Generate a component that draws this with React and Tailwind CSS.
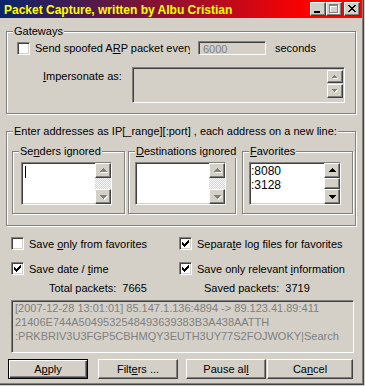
import React from "react";

const raised =
  "border border-t-white border-l-white border-r-[#404040] border-b-[#404040] shadow-[inset_-1px_-1px_0_#808080,inset_1px_1px_0_#d4d0c8]";
const sunken =
  "border border-t-[#808080] border-l-[#808080] border-r-white border-b-white shadow-[inset_1px_1px_0_#404040,inset_-1px_-1px_0_#d4d0c8]";
const groupCls =
  "relative border border-[#808080] shadow-[1px_1px_0_#ffffff,inset_1px_1px_0_#ffffff]";

function U({ children }) {
  return <span className="underline underline-offset-[1px]">{children}</span>;
}

function Group({ label, className = "", children }) {
  return (
    <div className={`${groupCls} ${className}`}>
      <span className="absolute left-[6px] top-[-8px] bg-[#d4d0c8] px-[1px] leading-[14px] whitespace-nowrap">
        {label}
      </span>
      {children}
    </div>
  );
}

function CheckMark() {
  return (
    <svg className="absolute left-[2px] top-[2px]" width="7" height="7" viewBox="0 0 7 7" shapeRendering="crispEdges">
      <path
        fill="#000"
        d="M6 0h1v1H6z M5 1h2v1H5z M0 2h1v1H0z M4 2h3v1H4z M0 3h2v1H0z M3 3h3v1H3z M0 4h5v1H0z M1 5h3v1H1z M2 6h1v1H2z"
      />
    </svg>
  );
}

function Check({ checked }) {
  return (
    <span className={`relative block w-[13px] h-[13px] shrink-0 bg-white ${sunken}`}>
      {checked && <CheckMark />}
    </span>
  );
}

function Arrow({ dir = "up", disabled, small }) {
  const up = small
    ? "M2 0h1v1H2z M1 1h3v1H1z M0 2h5v1H0z"
    : "M3 0h1v1H3z M2 1h3v1H2z M1 2h5v1H1z M0 3h7v1H0z";
  const down = small
    ? "M0 0h5v1H0z M1 1h3v1H1z M2 2h1v1H2z"
    : "M0 0h7v1H0z M1 1h5v1H1z M2 2h3v1H2z M3 3h1v1H3z";
  const d = dir === "up" ? up : down;
  const w = small ? 5 : 7;
  const h = small ? 3 : 4;
  return (
    <svg width={w + 1} height={h + 1} viewBox={`0 0 ${w + 1} ${h + 1}`} shapeRendering="crispEdges">
      {disabled ? (
        <>
          <path fill="#ffffff" d={d} transform="translate(1 1)" />
          <path fill="#808080" d={d} />
        </>
      ) : (
        <path fill="#000000" d={d} />
      )}
    </svg>
  );
}

function ScrollBtn({ dir, disabled, className = "" }) {
  return (
    <div className={`flex items-center justify-center bg-[#d4d0c8] ${raised} ${className}`}>
      <span className={dir === "up" ? "mt-[-1px] ml-[1px]" : "mt-[1px] ml-[1px]"}>
        <Arrow dir={dir} disabled={disabled} />
      </span>
    </div>
  );
}

function Scroll({ disabled }) {
  return (
    <div className="flex flex-col w-[16px] h-full shrink-0">
      <ScrollBtn dir="up" disabled={disabled} className="h-[15px]" />
      {disabled ? (
        <div className="flex-1 bg-[image:repeating-conic-gradient(#ffffff_0%_25%,#d4d0c8_0%_50%)] bg-[length:2px_2px]" />
      ) : (
        <div className={`flex-1 bg-[#d4d0c8] ${raised}`} />
      )}
      <ScrollBtn dir="down" disabled={disabled} className="h-[15px]" />
    </div>
  );
}

function TitleBtn({ children }) {
  return (
    <div className={`relative w-[16px] h-[14px] bg-[#d4d0c8] ${raised}`}>{children}</div>
  );
}

function Button({ children, def, className = "" }) {
  const cls = def
    ? "border border-black shadow-[inset_1px_1px_0_#ffffff,inset_-1px_-1px_0_#404040,inset_-2px_-2px_0_#808080]"
    : raised;
  return (
    <div className={`h-[20px] flex items-center justify-center bg-[#d4d0c8] leading-[14px] ${cls} ${className}`}>
      {children}
    </div>
  );
}

export default function App() {
  return (
    <div className="w-[365px] h-[386px] bg-[#d4d0c8] overflow-hidden font-['Liberation_Sans',Arial,sans-serif] text-[11px] text-black">
      <div className="w-[364px] h-[385px] border-r border-b border-[#404040] shadow-[inset_-1px_-1px_0_#808080] flex flex-col">
        {/* Title bar */}
        <div className="w-[362px] h-[18px] shrink-0 flex items-center bg-[image:linear-gradient(to_right,#0a246a_0%,#ff0000_85%)]">
          <span className="ml-[4px] pt-[1px] text-[12px] font-bold text-[#ffff00] leading-[14px] whitespace-nowrap">
            Packet Capture, written by Albu Cristian
          </span>
          <div className="ml-auto flex items-center mr-[2px]">
            <TitleBtn>
              <svg className="absolute left-[3px] top-[8px]" width="6" height="2" shapeRendering="crispEdges">
                <rect x="0" y="0" width="6" height="2" fill="#000" />
              </svg>
            </TitleBtn>
            <TitleBtn>
              <svg className="absolute left-[2px] top-[1px]" width="10" height="10" viewBox="0 0 10 10" shapeRendering="crispEdges">
                <path fill="#ffffff" transform="translate(1 1)" d="M0 0h9v2H0z M0 2h1v7H0z M8 2h1v7H8z M0 8h9v1H0z" />
                <path fill="#808080" d="M0 0h9v2H0z M0 2h1v7H0z M8 2h1v7H8z M0 8h9v1H0z" />
              </svg>
            </TitleBtn>
            <div className="ml-[2px]">
              <TitleBtn>
                <svg className="absolute left-[3px] top-[2px]" width="8" height="7" viewBox="0 0 8 7" shapeRendering="crispEdges">
                  <path
                    fill="#000"
                    d="M0 0h2v1H0z M6 0h2v1H6z M1 1h2v1H1z M5 1h2v1H5z M2 2h4v1H2z M3 3h2v1H3z M2 4h4v1H2z M1 5h2v1H1z M5 5h2v1H5z M0 6h2v1H0z M6 6h2v1H6z"
                  />
                </svg>
              </TitleBtn>
            </div>
          </div>
        </div>

        {/* Gateways */}
        <Group label="Gateways" className="ml-[6px] mt-[13px] w-[350px] h-[83px] shrink-0">
          <div className="flex items-center mt-[9px] ml-[10px] h-[14px]">
            <div className="w-[173px] overflow-hidden flex items-center gap-[5px] whitespace-nowrap">
              <Check />
              <span className="leading-[14px]">
                Send spoofed A<U>R</U>P packet every
              </span>
            </div>
            <div className={`ml-[8px] w-[68px] h-[14px] overflow-hidden bg-[#d4d0c8] ${sunken}`}>
              <div className="pl-[4px] leading-[14px] text-[#808080]">6000</div>
            </div>
            <span className="ml-[9px] leading-[14px]">seconds</span>
          </div>
          <div className="flex items-start mt-[12px]">
            <div className="w-[125px] pl-[36px] mt-[2px] leading-[14px] whitespace-nowrap">
              <U>I</U>mpersonate as:
            </div>
            <div className={`w-[213px] h-[36px] bg-[#d4d0c8] ${sunken} flex justify-end`}>
              <div className="flex flex-col gap-[1px] pt-[2px] mr-[1px]">
                <div className={`w-[16px] h-[13px] flex items-center justify-center ${raised}`}>
                  <Arrow dir="up" disabled small />
                </div>
                <div className={`w-[16px] h-[14px] flex items-center justify-center ${raised}`}>
                  <Arrow dir="down" disabled small />
                </div>
              </div>
            </div>
          </div>
        </Group>

        {/* Addresses */}
        <Group
          label="Enter addresses as IP[_range][:port] , each address on a new line:"
          className="ml-[6px] mt-[17px] w-[350px] h-[95px] shrink-0"
        >
          <div className="flex mt-[19px] ml-[5px]">
            <Group label={<>Se<U>n</U>ders ignored</>} className="w-[113px] h-[63px]">
              <div className={`mt-[10px] ml-[8px] w-[91px] h-[43px] bg-white ${sunken} flex`}>
                <div className="flex-1 relative">
                  <div className="absolute left-[3px] top-[3px] w-[1px] h-[12px] bg-black" />
                </div>
                <Scroll disabled />
              </div>
            </Group>
            <Group label={<><U>D</U>estinations ignored</>} className="ml-[3px] w-[108px] h-[63px]">
              <div className={`mt-[10px] ml-[6px] w-[91px] h-[43px] bg-white ${sunken} flex`}>
                <div className="flex-1" />
                <Scroll disabled />
              </div>
            </Group>
            <Group label={<><U>F</U>avorites</>} className="ml-[6px] w-[111px] h-[63px]">
              <div className={`mt-[10px] ml-[6px] w-[92px] h-[43px] bg-white ${sunken} flex`}>
                <div className="flex-1 pl-[1px] pt-[1px] leading-[14px] text-[12px]">
                  <div>:8080</div>
                  <div>:3128</div>
                </div>
                <Scroll />
              </div>
            </Group>
          </div>
        </Group>

        {/* Options */}
        <div className="grid grid-cols-[168px_1fr] gap-y-[12px] mt-[11px] ml-[11px]">
          <div className="flex items-center gap-[5px] h-[13px] whitespace-nowrap">
            <Check />
            <span className="leading-[14px]">
              Save <U>o</U>nly from favorites
            </span>
          </div>
          <div className="flex items-center gap-[5px] h-[13px] whitespace-nowrap">
            <Check checked />
            <span className="leading-[14px]">
              Separa<U>t</U>e log files for favorites
            </span>
          </div>
          <div className="flex items-center gap-[5px] h-[13px] whitespace-nowrap">
            <Check checked />
            <span className="leading-[14px]">
              Save date / <U>t</U>ime
            </span>
          </div>
          <div className="flex items-center gap-[5px] h-[13px] whitespace-nowrap">
            <Check checked />
            <span className="leading-[14px]">
              Save only relevant <U>i</U>nformation
            </span>
          </div>
        </div>

        <div className="flex mt-[6px] leading-[14px] whitespace-pre">
          <span className="ml-[49px] w-[155px]">Total packets:  7665</span>
          <span>Saved packets:  3719</span>
        </div>

        <div className={`ml-[11px] mt-[5px] w-[343px] h-[53px] shrink-0 bg-[#d4d0c8] ${sunken} overflow-hidden`}>
          <div className="pl-[3px] leading-[14px] text-[#808080] whitespace-nowrap">
            <div>[2007-12-28 13:01:01] 85.147.1.136:4894 -&gt; 89.123.41.89:411</div>
            <div>21406E744A5049532548493639383B3A438AATTH</div>
            <div>:PRKBRIV3U3FGP5CBHMQY3EUTH3UY77S2FOJWOKY|Search</div>
          </div>
        </div>

        <div className="flex mt-[6px] ml-[8px]">
          <Button def className="w-[80px]">
            A<U>p</U>ply
          </Button>
          <Button className="ml-[10px] w-[80px]">
            Filt<U>e</U>rs ...
          </Button>
          <Button className="ml-[8px] w-[80px]">
            Pause al<U>l</U>
          </Button>
          <Button className="ml-[1px] w-[86px]">
            Ca<U>n</U>cel
          </Button>
        </div>
      </div>
    </div>
  );
}
